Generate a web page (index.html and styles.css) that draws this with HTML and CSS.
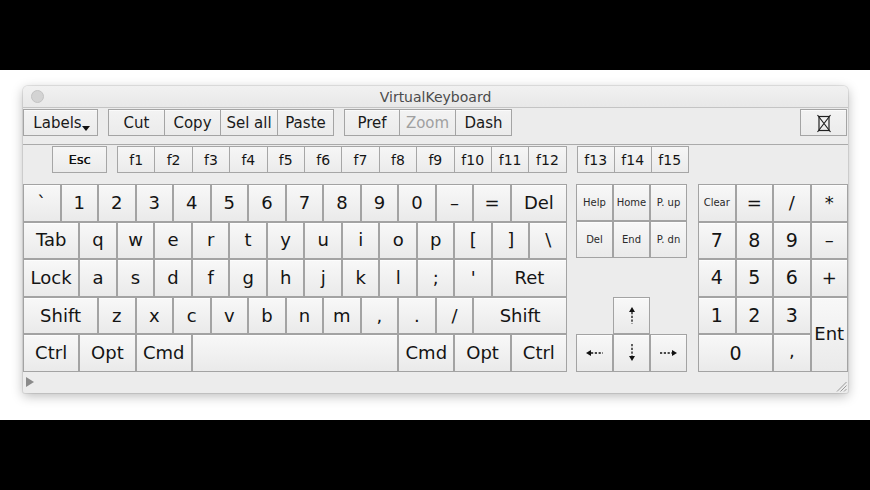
FILE: index.html
```html
<!DOCTYPE html>
<html>
<head>
<meta charset="utf-8">
<link rel="stylesheet" href="styles.css">
</head>
<body>
<div class="bar"></div>
<div class="stage">
  <div class="window">
    <div class="titlebar">
      <span class="closebtn"></span>
      <span class="title">VirtualKeyboard</span>
    </div>
    <div class="toolbar">
      <div class="tb w-labels">Labels<span class="caret"></span></div>
      <div class="tbgroup">
        <div class="tb w56">Cut</div>
        <div class="tb w56">Copy</div>
        <div class="tb w57">Sel all</div>
        <div class="tb w56">Paste</div>
      </div>
      <div class="tbgroup">
        <div class="tb w55">Pref</div>
        <div class="tb w56 disabled">Zoom</div>
        <div class="tb w56">Dash</div>
      </div>
      <div class="tb w-x">
        <svg width="16" height="19" viewBox="0 0 16 19"><rect x="3" y="2.5" width="10" height="14" fill="none" stroke="#222" stroke-width="1.2"/><path d="M1.5 1 L14.5 18 M14.5 1 L1.5 18" stroke="#222" stroke-width="1.2"/></svg>
      </div>
    </div>
    <div class="fnrow">
      <div class="fk esc">Esc</div>
      <div class="fgroup f12">
        <div class="fk">f1</div><div class="fk">f2</div><div class="fk">f3</div><div class="fk">f4</div>
        <div class="fk">f5</div><div class="fk">f6</div><div class="fk">f7</div><div class="fk">f8</div>
        <div class="fk">f9</div><div class="fk">f10</div><div class="fk">f11</div><div class="fk">f12</div>
      </div>
      <div class="fgroup f3">
        <div class="fk">f13</div><div class="fk">f14</div><div class="fk">f15</div>
      </div>
    </div>
    <div class="keys">
      <div class="main">
        <div class="k u2">`</div><div class="k u2">1</div><div class="k u2">2</div><div class="k u2">3</div>
        <div class="k u2">4</div><div class="k u2">5</div><div class="k u2">6</div><div class="k u2">7</div>
        <div class="k u2">8</div><div class="k u2">9</div><div class="k u2">0</div><div class="k u2">–</div>
        <div class="k u2">=</div><div class="k u3">Del</div>

        <div class="k u3">Tab</div><div class="k u2">q</div><div class="k u2">w</div><div class="k u2">e</div>
        <div class="k u2">r</div><div class="k u2">t</div><div class="k u2">y</div><div class="k u2">u</div>
        <div class="k u2">i</div><div class="k u2">o</div><div class="k u2">p</div><div class="k u2">[</div>
        <div class="k u2">]</div><div class="k u2">\</div>

        <div class="k u3">Lock</div><div class="k u2">a</div><div class="k u2">s</div><div class="k u2">d</div>
        <div class="k u2">f</div><div class="k u2">g</div><div class="k u2">h</div><div class="k u2">j</div>
        <div class="k u2">k</div><div class="k u2">l</div><div class="k u2">;</div><div class="k u2">'</div>
        <div class="k u4">Ret</div>

        <div class="k u4">Shift</div><div class="k u2">z</div><div class="k u2">x</div><div class="k u2">c</div>
        <div class="k u2">v</div><div class="k u2">b</div><div class="k u2">n</div><div class="k u2">m</div>
        <div class="k u2">,</div><div class="k u2">.</div><div class="k u2">/</div><div class="k u5">Shift</div>

        <div class="k u3">Ctrl</div><div class="k u3">Opt</div><div class="k u3">Cmd</div>
        <div class="k u11"></div>
        <div class="k u3">Cmd</div><div class="k u3">Opt</div><div class="k u3">Ctrl</div>
      </div>
      <div class="nav">
        <div class="k sm">Help</div><div class="k sm">Home</div><div class="k sm">P. up</div>
        <div class="k sm">Del</div><div class="k sm">End</div><div class="k sm">P. dn</div>
        <div class="k arrow up-key">
          <svg width="8" height="17" viewBox="0 0 8 17"><path d="M4 0 L7 5 L1 5 Z" fill="#111"/><path d="M4 5 L4 17" stroke="#111" stroke-width="1.3" stroke-dasharray="2.2 1.6"/></svg>
        </div>
        <div class="k arrow left-key">
          <svg width="17" height="8" viewBox="0 0 17 8"><path d="M0 4 L5 1 L5 7 Z" fill="#111"/><path d="M5 4 L17 4" stroke="#111" stroke-width="1.3" stroke-dasharray="2.2 1.6"/></svg>
        </div>
        <div class="k arrow down-key">
          <svg width="8" height="17" viewBox="0 0 8 17"><path d="M4 17 L7 12 L1 12 Z" fill="#111"/><path d="M4 0 L4 12" stroke="#111" stroke-width="1.3" stroke-dasharray="2.2 1.6"/></svg>
        </div>
        <div class="k arrow right-key">
          <svg width="17" height="8" viewBox="0 0 17 8"><path d="M17 4 L12 1 L12 7 Z" fill="#111"/><path d="M0 4 L12 4" stroke="#111" stroke-width="1.3" stroke-dasharray="2.2 1.6"/></svg>
        </div>
      </div>
      <div class="pad">
        <div class="k sm">Clear</div><div class="k">=</div><div class="k">/</div><div class="k star">*</div>
        <div class="k num">7</div><div class="k num">8</div><div class="k num">9</div><div class="k">–</div>
        <div class="k num">4</div><div class="k num">5</div><div class="k num">6</div><div class="k">+</div>
        <div class="k num">1</div><div class="k num">2</div><div class="k num">3</div>
        <div class="k ent">Ent</div>
        <div class="k num zero">0</div><div class="k comma">,</div>
      </div>
    </div>
    <div class="bottombar">
      <span class="disclose"></span>
      <svg class="grip" width="12" height="12" viewBox="0 0 12 12"><path d="M11.5 2 L2 11.5 M11.5 5.5 L5.5 11.5 M11.5 9 L9 11.5" stroke="#9a9a9a" stroke-width="1"/></svg>
    </div>
  </div>
</div>
<div class="bar"></div>
</body>
</html>
```

FILE: styles.css
```css
* { box-sizing: border-box; }
html, body { margin: 0; padding: 0; }
body {
  width: 870px;
  height: 490px;
  background: #fff;
  font-family: "DejaVu Sans", "Liberation Sans", sans-serif;
  color: #151515;
  overflow: hidden;
}
.bar { height: 70px; background: #000; }
.stage { height: 350px; background: #fff; padding-top: 16px; }

.window {
  margin-left: 23px;
  width: 825px;
  height: 307px;
  background: #ececec;
  border-radius: 5px 5px 2px 2px;
  box-shadow: 0 3px 12px rgba(0,0,0,0.28), 0 0 0 1px rgba(0,0,0,0.08);
  overflow: hidden;
  display: flex;
  flex-direction: column;
}

.titlebar {
  height: 22px;
  position: relative;
  background: linear-gradient(#f1f1f1, #e8e8e8);
  border-bottom: 1px solid #c4c4c4;
  display: flex;
  align-items: center;
  justify-content: center;
}
.closebtn {
  position: absolute;
  left: 8px;
  top: 4px;
  width: 13px;
  height: 13px;
  border-radius: 50%;
  background: #d3d3d3;
  border: 1px solid #c2c2c2;
}
.title {
  font-size: 14px;
  color: #4b4b4b;
  line-height: 1;
  margin-top: 1px;
}

.toolbar {
  height: 37px;
  border-bottom: 1px solid #aaa;
  display: flex;
  align-items: flex-start;
  padding-top: 1px;
}
.tbgroup { display: flex; margin-left: 10px; }
.tb {
  height: 27px;
  border: 1px solid #a4a4a4;
  background: linear-gradient(#f3f3f3, #ebebeb);
  box-shadow: inset 0 1px 0 #fbfbfb;
  font-size: 15px;
  display: flex;
  align-items: center;
  justify-content: center;
  line-height: 1;
  color: #1a1a1a;
  padding-top: 1px;
}
.tb + .tb { margin-left: -1px; }
.w-labels { width: 75px; padding-left: 2px; }
.w55 { width: 56px; }
.w56 { width: 57px; }
.w57 { width: 58px; }
.disabled { color: #a0a0a0; }
.caret {
  display: inline-block;
  width: 0;
  height: 0;
  border-left: 4px solid transparent;
  border-right: 4px solid transparent;
  border-top: 5px solid #111;
  margin-top: 11px;
  margin-left: 0px;
}
.w-x { width: 47px; margin-left: auto; margin-right: 1px; }

.fnrow {
  display: flex;
  margin-top: 1px;
  height: 27px;
}
.fk {
  height: 27px;
  width: 37.4px;
  border: 1px solid #a6a6a6;
  background: linear-gradient(#f6f6f6, #ebebeb);
  font-size: 14px;
  display: flex;
  align-items: center;
  justify-content: center;
  line-height: 1;
}
.esc { width: 55px; margin-left: 29px; font-size: 13px; color: #111; text-shadow: 0.3px 0 0 #111; }
.fgroup { display: flex; margin-left: 10px; }
.fgroup .fk + .fk { margin-left: -1px; }
.fgroup.f12 .fk { width: 38.4px; }
.fgroup.f3 .fk { width: 38px; }

.keys {
  display: flex;
  margin-top: 11px;
  height: 188px;
}
.k {
  border: 1px solid #a3a3a3;
  background: linear-gradient(#f8f8f8, #eaeaea);
  box-shadow: inset 0 1px 0 #fdfdfd;
  display: flex;
  align-items: center;
  justify-content: center;
  font-size: 18px;
  line-height: 1;
  color: #141414;
}
.main {
  width: 544px;
  display: grid;
  grid-template-columns: repeat(29, 1fr);
  grid-template-rows: repeat(5, 37.6px);
}
.u2 { grid-column: span 2; }
.u3 { grid-column: span 3; }
.u4 { grid-column: span 4; }
.u5 { grid-column: span 5; }
.u11 { grid-column: span 11; }

.nav {
  width: 111px;
  margin-left: 9px;
  display: grid;
  grid-template-columns: repeat(3, 37px);
  grid-template-rows: repeat(2, 37px) 39px 37px 37.5px;
  align-self: flex-start;
}
.sm { font-size: 10px; color: #2a2a2a; }
.up-key { grid-column: 2; grid-row: 4; }
.left-key { grid-column: 1; grid-row: 5; }
.down-key { grid-column: 2; grid-row: 5; }
.right-key { grid-column: 3; grid-row: 5; }

.pad {
  width: 150px;
  margin-left: 11px;
  display: grid;
  grid-template-columns: repeat(4, 1fr);
  grid-template-rows: repeat(5, 37.6px);
}
.num { font-size: 19px; }
.star { align-items: flex-start; padding-top: 9px; }
.ent { grid-column: 4; grid-row: 4 / span 2; }
.zero { grid-column: 1 / span 2; }
.comma { align-items: flex-end; padding-bottom: 11px; }

.bottombar {
  flex: 1;
  position: relative;
}
.disclose {
  position: absolute;
  left: 3px;
  top: 5px;
  width: 0;
  height: 0;
  border-top: 5px solid transparent;
  border-bottom: 5px solid transparent;
  border-left: 8px solid #8a8a8a;
}
.grip { position: absolute; right: 1px; bottom: 1px; }
```
